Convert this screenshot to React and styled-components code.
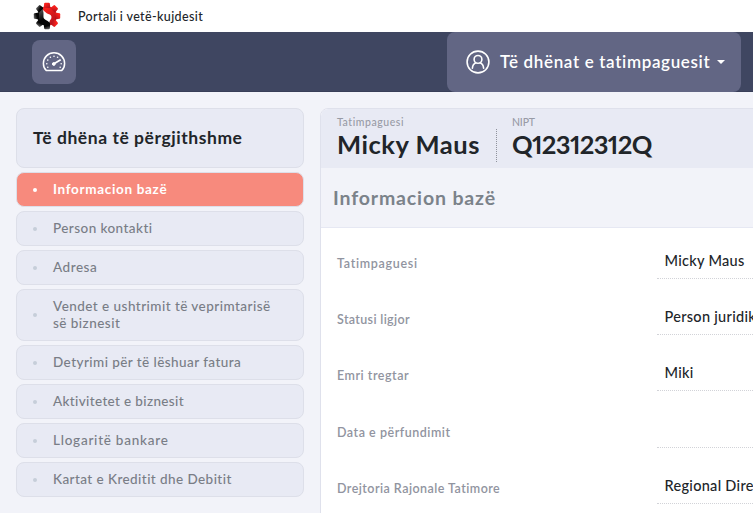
import React from "react";
import styled, { createGlobalStyle } from "styled-components";

const navItems = [
  { text: "Informacion bazë", spacing: 0.68, active: true },
  { text: "Person kontakti", spacing: 0.44 },
  { text: "Adresa", spacing: 0.52 },
  { text: "Vendet e ushtrimit të veprimtarisë së biznesit", spacing: 0.46 },
  { text: "Detyrimi për të lëshuar fatura", spacing: 0.44 },
  { text: "Aktivitetet e biznesit", spacing: 0.36 },
  { text: "Llogaritë bankare", spacing: 0.76 },
  { text: "Kartat e Kreditit dhe Debitit", spacing: 0.43 },
];

const fields = [
  { label: "Tatimpaguesi", value: "Micky Maus", spacing: 0.7 },
  { label: "Statusi ligjor", value: "Person juridik", spacing: 0.34 },
  { label: "Emri tregtar", value: "Miki", spacing: 0.52 },
  { label: "Data e përfundimit", value: "", spacing: 0.52 },
  { label: "Drejtoria Rajonale Tatimore", value: "Regional Directorate", spacing: 0.46 },
];

export default function App() {
  return (
    <Page>
      <GlobalStyle />
      <Brand>
        <Logo />
        <span>Portali i vetë-kujdesit</span>
      </Brand>
      <Navbar>
        <DashButton aria-label="Dashboard">
          <GaugeIcon />
        </DashButton>
        <UserMenu>
          <UserIcon />
          <span>Të dhënat e tatimpaguesit</span>
          <Caret />
        </UserMenu>
      </Navbar>
      <Content>
        <Sidebar>
          <SideTitle>Të dhëna të përgjithshme</SideTitle>
          {navItems.map((item) => (
            <SideItem key={item.text} $active={item.active} $spacing={item.spacing}>
              <span>{item.text}</span>
            </SideItem>
          ))}
        </Sidebar>
        <Panel>
          <PanelHead>
            <Fact>
              <small>Tatimpaguesi</small>
              <strong>Micky Maus</strong>
            </Fact>
            <Divider />
            <Fact $number>
              <small>NIPT</small>
              <strong>Q12312312Q</strong>
            </Fact>
          </PanelHead>
          <PanelTitle>Informacion bazë</PanelTitle>
          <Fields>
            {fields.map((field) => (
              <Field key={field.label}>
                <Label $spacing={field.spacing}>{field.label}</Label>
                <Value>{field.value}</Value>
              </Field>
            ))}
          </Fields>
        </Panel>
      </Content>
    </Page>
  );
}

function Logo() {
  const teeth = [0, 45, 90, 135, 180, 225, 270, 315];
  return (
    <svg width="28" height="28" viewBox="0 0 28 28">
      <defs>
        <linearGradient id="dark" x1="0" y1="0" x2="0.4" y2="1">
          <stop offset="0" stopColor="#747474" />
          <stop offset="0.7" stopColor="#050505" />
        </linearGradient>
        <linearGradient id="red" x1="0" y1="0" x2="1" y2="1">
          <stop offset="0.3" stopColor="#f8201c" />
          <stop offset="1" stopColor="#a5101c" />
        </linearGradient>
        <clipPath id="left">
          <path d="M0 0H10.5L10 8L14 15L17 20V28H0Z" />
        </clipPath>
        <clipPath id="right">
          <path d="M10.5 0H28V28H17V20L14 15L10 8Z" />
        </clipPath>
      </defs>
      {["left", "right"].map((side) => (
        <g key={side} clipPath={`url(#${side})`}>
          <g fill={side === "left" ? "url(#dark)" : "url(#red)"}>
            <circle cx="14" cy="14" r="9.8" />
            {teeth.map((angle) => (
              <path
                key={angle}
                d="M10.6 6L11.2 1.5Q11.4 0.8 12.2 0.8H15.8Q16.6 0.8 16.8 1.5L17.4 6Z"
                transform={`rotate(${angle} 14 14)`}
              />
            ))}
          </g>
        </g>
      ))}
      <path d="M9.8 8C12.3 9.4 12.8 11.6 15.3 11.9C17.4 12.2 18.9 13.8 18.4 16C17.8 18 16.2 18.2 16.5 21C15.2 18.4 12.6 18.7 11.2 16.8C9.6 14.4 11.4 11.8 9.8 8Z" fill="#fff" />
    </svg>
  );
}

function GaugeIcon() {
  return (
    <svg width="24" height="22" viewBox="0 0 24 22" fill="none" stroke="#fff">
      <path d="M4.2 19.4C2.3 17.6 1.4 15.2 1.4 12.4C1.4 6.4 6.1 1.8 12 1.8S22.6 6.4 22.6 12.4C22.6 15.2 21.7 17.6 19.8 19.4Z" strokeWidth="1.5" strokeLinejoin="round" />
      <path d="M12 12.8L18.2 9.1" strokeWidth="1.8" strokeLinecap="round" />
      <circle cx="11.8" cy="13" r="1.4" fill="#fff" />
      <g fill="#fff" stroke="none">
        <circle cx="4.8" cy="12.8" r="0.8" />
        <circle cx="5.8" cy="9.1" r="0.8" />
        <circle cx="8.4" cy="6.3" r="0.8" />
        <circle cx="12" cy="5.2" r="0.8" />
        <circle cx="15.6" cy="6.3" r="0.8" />
        <circle cx="19.2" cy="12.8" r="0.8" />
        <circle cx="5.8" cy="16.3" r="0.8" />
        <circle cx="18.2" cy="16.3" r="0.8" />
      </g>
    </svg>
  );
}

function UserIcon() {
  return (
    <svg width="24" height="24" viewBox="0 0 24 24" fill="none" stroke="#fff" strokeWidth="1.6">
      <circle cx="12" cy="12" r="10.9" />
      <circle cx="12" cy="9.4" r="3.9" />
      <path d="M6.4 18.2C6.6 15.2 8 13.5 9.9 12.8M17.6 18.2C17.4 15.2 16 13.5 14.1 12.8" strokeLinecap="round" />
    </svg>
  );
}

const GlobalStyle = createGlobalStyle`
  * {
    box-sizing: border-box;
  }
  body {
    margin: 0;
    overflow: hidden;
    background-color: #f2f3f9;
    font-family: Lato, "Liberation Sans", sans-serif;
    color: #212529;
  }
`;

const Page = styled.div`
  height: 513px;
  overflow: hidden;
`;

const Brand = styled.header`
  display: flex;
  align-items: center;
  gap: 17px;
  height: 32px;
  padding-left: 33px;
  background-color: #fff;
  font-size: 12.5px;
  font-weight: 500;
  letter-spacing: 0.37px;
`;

const Navbar = styled.nav`
  display: flex;
  align-items: center;
  justify-content: space-between;
  height: 60px;
  padding: 0 12px 0 32px;
  background-color: #3f4661;
  box-shadow: inset 0 -1px #383e58;
`;

const DashButton = styled.button`
  display: flex;
  align-items: center;
  justify-content: center;
  width: 44px;
  height: 44px;
  padding: 0;
  border: 0;
  border-radius: 8px;
  background-color: #626684;
`;

const UserMenu = styled.div`
  display: flex;
  align-items: center;
  width: 294px;
  height: 60px;
  padding: 0 0 1px 19px;
  border-radius: 8px;
  background-color: #626684;
  color: #fff;
  font-size: 17px;
  font-weight: 600;
  letter-spacing: 0.65px;
  white-space: nowrap;
  span {
    width: 217px;
    margin-left: 10px;
    padding-bottom: 1px;
  }
`;

const Caret = styled.i`
  border-top: 4px solid #fff;
  border-left: 4px solid transparent;
  border-right: 4px solid transparent;
`;

const Content = styled.div`
  display: flex;
  gap: 16px;
  padding: 16px 0 0 16px;
`;

const Sidebar = styled.aside`
  display: flex;
  flex-direction: column;
  flex-shrink: 0;
  gap: 4px;
  width: 288px;
`;

const SideTitle = styled.h2`
  display: flex;
  align-items: center;
  height: 60px;
  margin: 0;
  padding: 0 0 2px 16px;
  border: 1px solid #dddfe9;
  border-radius: 8px;
  background-color: #e8eaf4;
  font-size: 17.5px;
  font-weight: 700;
  letter-spacing: 0.55px;
`;

const SideItem = styled.a`
  display: flex;
  align-items: center;
  padding: 8px 30px 8px 16px;
  border: 1px solid #dddfe9;
  border-radius: 8px;
  background-color: ${(props) => (props.$active ? "#f78a7d" : "#e8eaf4")};
  color: ${(props) => (props.$active ? "#fff" : "#797d86")};
  font-size: 13.5px;
  font-weight: ${(props) => (props.$active ? 700 : 500)};
  line-height: 17px;
  letter-spacing: ${(props) => props.$spacing}px;
  &::before {
    content: "";
    flex-shrink: 0;
    width: 4px;
    height: 4px;
    margin-right: 16px;
    border-radius: 50%;
    background-color: ${(props) => (props.$active ? "#fff" : "#c6ced9")};
  }
`;

const Panel = styled.main`
  flex: none;
  width: 1000px;
  height: 500px;
  border: 1px solid #dfe1ec;
  border-radius: 8px 8px 0 0;
  background-color: #fff;
  overflow: hidden;
`;

const PanelHead = styled.div`
  display: flex;
  height: 59px;
  padding-left: 16px;
  background-color: #e8eaf4;
`;

const Fact = styled.div`
  display: flex;
  flex-direction: column;
  padding-top: 7px;
  small {
    color: #989ba6;
    font-size: 10.5px;
    font-weight: 500;
    line-height: 13px;
    letter-spacing: ${(props) => (props.$number ? -0.2 : 0.55)}px;
  }
  strong {
    font-size: 25.5px;
    line-height: 31px;
    letter-spacing: ${(props) => (props.$number ? -0.65 : 0.54)}px;
    font-variant-numeric: proportional-nums;
    white-space: nowrap;
  }
`;

const Divider = styled.div`
  height: 33px;
  margin: 20px 15px 0 16px;
  border-left: 1px dotted #8f929c;
`;

const PanelTitle = styled.h3`
  display: flex;
  align-items: center;
  height: 60px;
  margin: 0;
  padding: 0 0 1px 12px;
  border-bottom: 1px solid #e6e8f3;
  background-color: #f2f3f9;
  color: #7b828a;
  font-size: 19.5px;
  font-weight: 700;
  letter-spacing: 0.85px;
`;

const Fields = styled.div`
  padding: 16px;
`;

const Field = styled.div`
  display: flex;
  height: 35px;
  margin-bottom: 21.2px;
`;

const Label = styled.label`
  width: 320px;
  padding-top: 12px;
  color: #9194a0;
  font-size: 12.5px;
  font-weight: 600;
  line-height: 16px;
  letter-spacing: ${(props) => props.$spacing}px;
`;

const Value = styled.div`
  flex: 1;
  padding: 8px 8px 8px 7.5px;
  border-bottom: 1px dotted #d2d3d8;
  font-size: 14.5px;
  font-weight: 500;
  line-height: 18px;
  letter-spacing: 0.3px;
`;
